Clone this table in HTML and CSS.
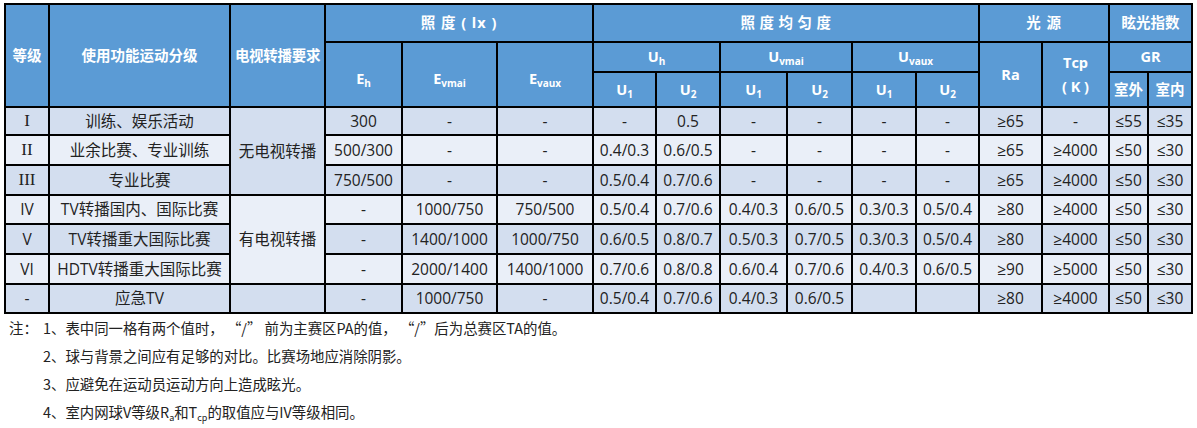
FILE: index.html
```html
<!DOCTYPE html>
<html lang="zh">
<head>
<meta charset="utf-8">
<title>照度标准</title>
<link rel="stylesheet" href="styles.css">
</head>
<body>
<div class="page">
<table class="std">
<colgroup>
<col style="width:44px"><col style="width:181px"><col style="width:95px"><col style="width:77px"><col style="width:95px"><col style="width:96px"><col style="width:63px"><col style="width:64px"><col style="width:67px"><col style="width:65px"><col style="width:64px"><col style="width:63px"><col style="width:63px"><col style="width:67px"><col style="width:39px"><col style="width:44px">
</colgroup>
<thead>
<tr class="h1">
<th rowspan="3">等级</th>
<th rowspan="3">使用功能运动分级</th>
<th rowspan="3" class="tight">电视转播要求</th>
<th colspan="3" class="spaced">照 度 ( lx )</th>
<th colspan="6" class="wide">照度均匀度</th>
<th colspan="2" class="spaced">光 源</th>
<th colspan="2">眩光指数</th>
</tr>
<tr class="h2">
<th rowspan="2" class="low">E<sub>h</sub></th>
<th rowspan="2" class="low">E<sub>vmai</sub></th>
<th rowspan="2" class="low">E<sub>vaux</sub></th>
<th colspan="2">U<sub>h</sub></th>
<th colspan="2">U<sub>vmai</sub></th>
<th colspan="2">U<sub>vaux</sub></th>
<th rowspan="2">Ra</th>
<th rowspan="2" class="tcp">Tcp<br>( K )</th>
<th colspan="2">GR</th>
</tr>
<tr class="h3">
<th>U<sub>1</sub></th><th>U<sub>2</sub></th>
<th>U<sub>1</sub></th><th>U<sub>2</sub></th>
<th>U<sub>1</sub></th><th>U<sub>2</sub></th>
<th class="cjk">室外</th><th class="cjk">室内</th>
</tr>
</thead>
<tbody>
<tr class="dark r28">
<td class="roman">I</td><td>训练、娱乐活动</td><td rowspan="3" class="dark">无电视转播</td>
<td>300</td><td>-</td><td>-</td><td>-</td><td>0.5</td><td>-</td><td>-</td><td>-</td><td>-</td><td>≥65</td><td>-</td><td>≤55</td><td>≤35</td>
</tr>
<tr class="light r30">
<td class="roman">II</td><td>业余比赛、专业训练</td>
<td>500/300</td><td>-</td><td>-</td><td>0.4/0.3</td><td>0.6/0.5</td><td>-</td><td>-</td><td>-</td><td>-</td><td>≥65</td><td>≥4000</td><td>≤50</td><td>≤30</td>
</tr>
<tr class="dark r30">
<td class="roman">III</td><td>专业比赛</td>
<td>750/500</td><td>-</td><td>-</td><td>0.5/0.4</td><td>0.7/0.6</td><td>-</td><td>-</td><td>-</td><td>-</td><td>≥65</td><td>≥4000</td><td>≤50</td><td>≤30</td>
</tr>
<tr class="light r29">
<td>IV</td><td>TV转播国内、国际比赛</td><td rowspan="3" class="light">有电视转播</td>
<td>-</td><td>1000/750</td><td>750/500</td><td>0.5/0.4</td><td>0.7/0.6</td><td>0.4/0.3</td><td>0.6/0.5</td><td>0.3/0.3</td><td>0.5/0.4</td><td>≥80</td><td>≥4000</td><td>≤50</td><td>≤30</td>
</tr>
<tr class="dark r30">
<td>V</td><td>TV转播重大国际比赛</td>
<td>-</td><td>1400/1000</td><td>1000/750</td><td>0.6/0.5</td><td>0.8/0.7</td><td>0.5/0.3</td><td>0.7/0.5</td><td>0.3/0.3</td><td>0.5/0.4</td><td>≥80</td><td>≥4000</td><td>≤50</td><td>≤30</td>
</tr>
<tr class="light r30">
<td>VI</td><td>HDTV转播重大国际比赛</td>
<td>-</td><td>2000/1400</td><td>1400/1000</td><td>0.7/0.6</td><td>0.8/0.8</td><td>0.6/0.4</td><td>0.7/0.6</td><td>0.4/0.3</td><td>0.6/0.5</td><td>≥90</td><td>≥5000</td><td>≤50</td><td>≤30</td>
</tr>
<tr class="dark r29">
<td>-</td><td>应急TV</td><td></td>
<td>-</td><td>1000/750</td><td>-</td><td>0.5/0.4</td><td>0.7/0.6</td><td>0.4/0.3</td><td>0.6/0.5</td><td></td><td></td><td>≥80</td><td>≥4000</td><td>≤50</td><td>≤30</td>
</tr>
</tbody>
</table>
<div class="notes">
<div class="note"><span class="lbl">注：</span><span>1、表中同一格有两个值时， “/” 前为主赛区PA的值， “/”后为总赛区TA的值。</span></div>
<div class="note"><span class="lbl"></span><span>2、球与背景之间应有足够的对比。比赛场地应消除阴影。</span></div>
<div class="note"><span class="lbl"></span><span>3、应避免在运动员运动方向上造成眩光。</span></div>
<div class="note"><span class="lbl"></span><span>4、室内网球V等级R<sub>a</sub>和T<sub>cp</sub>的取值应与IV等级相同。</span></div>
</div>
</div>
</body>
</html>
```

FILE: styles.css
```css
html, body {
  margin: 0;
  padding: 0;
  background: #ffffff;
}
.page {
  padding: 3px 0 0 4px;
  font-family: "Open Sans", "Noto Sans CJK SC", sans-serif;
  color: #222;
}
.std {
  border-collapse: collapse;
  table-layout: fixed;
  width: 1189px;
}
.std th, .std td {
  border: 2px solid #000;
  padding: 0;
  text-align: center;
  vertical-align: middle;
  white-space: nowrap;
  overflow: hidden;
}
.std th {
  background: #5b9bd5;
  color: #fff;
  font-weight: bold;
  font-size: 14.5px;
  font-family: "Open Sans", "Noto Sans CJK SC", sans-serif;
  line-height: 1.2;
}
.std th sub {
  font-size: 10px;
  vertical-align: -3px;
  line-height: 0;
}
.std th.tight { letter-spacing: -0.3px; }
.std th.spaced { letter-spacing: 1px; }
.std th.wide { letter-spacing: 4.5px; padding-left: 4px; }
.std th.low { padding-top: 8px; }
.std th.tcp { line-height: 24px; }
.h1 { height: 38px; }
.h2 { height: 30px; }
.h3 { height: 35px; }
.std td {
  font-size: 15.5px;
  line-height: 1.2;
}
.r28 { height: 28px; }
.r29 { height: 29px; }
.r30 { height: 30px; }
tr.dark td, td.dark { background: #d3deef; }
tr.light td, td.light { background: #eaeff8; }
tr.light td.dark { background: #d3deef; }
tr.dark td.light { background: #eaeff8; }
td.roman {
  font-family: "Liberation Serif", "DejaVu Serif", serif;
  font-size: 17px;
}
.notes {
  margin-top: -1px;
  padding: 0 0 0 5px;
  font-family: "Noto Sans CJK SC", sans-serif;
  font-size: 14.4px;
  color: #222;
}
.note {
  display: flex;
  height: 28px;
  align-items: center;
}
.lbl {
  width: 34px;
  flex: none;
}
.note sub {
  font-size: 9px;
  vertical-align: -3px;
  line-height: 0;
}
```
